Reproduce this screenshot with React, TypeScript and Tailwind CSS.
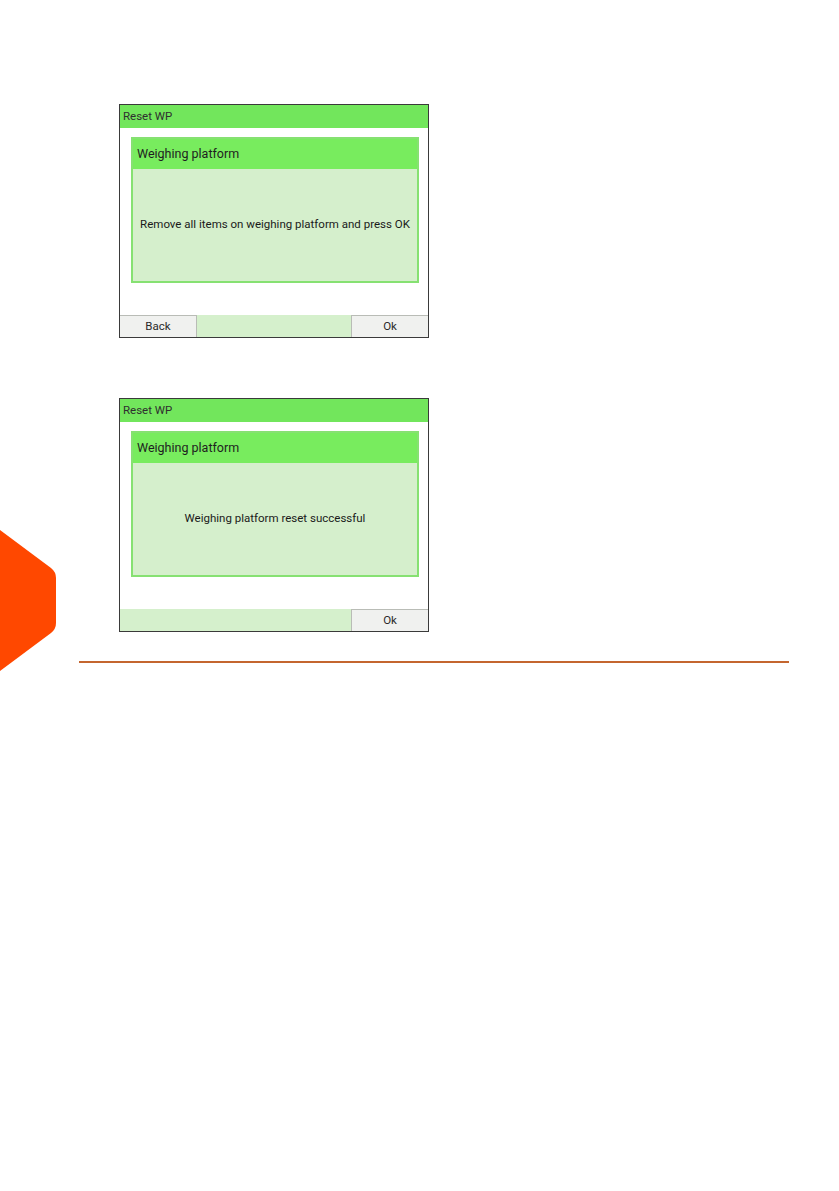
import React from 'react';

type ScreenProps = {
  title: string;
  message: string;
  showBack?: boolean;
};

const Screen: React.FC<ScreenProps> = ({ title, message, showBack }) => {
  return (
    <div className="w-[310px] h-[234px] border border-[#3a3a3a] bg-white flex flex-col font-['Roboto',sans-serif]">
      {/* Title bar */}
      <div className="h-[23px] shrink-0 bg-[#72e65c] flex items-center pl-[3px] text-[11.5px] text-[#2f2f2f]">
        {title}
      </div>

      {/* Dialog panel */}
      <div className="mt-[9px] ml-[11px] mr-[9px] h-[146px] border-2 border-[#86e172] flex flex-col">
        <div className="h-[30px] shrink-0 bg-[#78ec5e] flex items-center pl-[4px] text-[12.5px] text-[#1f1f1f]">
          Weighing platform
        </div>
        <div className="flex-1 bg-[#d5efcc] flex items-center justify-center text-[11.5px] text-[#1a1a1a]">
          {message}
        </div>
      </div>

      <div className="flex-1" />

      {/* Button row */}
      <div className="h-[22px] shrink-0 bg-[#d5f0cc] flex justify-between">
        {showBack ? (
          <div className="w-[77px] h-full bg-[#f0f1ef] border border-[#b9bcb6] border-b-0 border-l-0 flex items-center justify-center text-[11.5px] text-[#2a2a2a]">
            Back
          </div>
        ) : (
          <div />
        )}
        <div className="w-[77px] h-full bg-[#f0f1ef] border border-[#b9bcb6] border-b-0 border-r-0 flex items-center justify-center text-[11.5px] text-[#2a2a2a]">
          Ok
        </div>
      </div>
    </div>
  );
};

const App: React.FC = () => {
  return (
    <div className="relative w-[839px] h-[1191px] bg-white overflow-hidden">
      {/* Orange side tab */}
      <svg
        className="absolute left-0 top-[530px]"
        width="58"
        height="141"
        viewBox="0 0 58 141"
        aria-hidden="true"
      >
        <path d="M0 0 L51 38 Q56 42 56 48 L56 93 Q56 99 51 103 L0 141 Z" fill="#ff4800" />
      </svg>

      <div className="flex flex-col pt-[104px]">
        <div className="pl-[119px]">
          <Screen title="Reset WP" message="Remove all items on weighing platform and press OK" showBack />
        </div>
        <div className="pl-[119px] mt-[60px]">
          <Screen title="Reset WP" message="Weighing platform reset successful" />
        </div>
        <div className="mt-[29px] ml-[79px] w-[710px] h-[2px] bg-[#c4662f]" />
      </div>
    </div>
  );
};

export default App;
